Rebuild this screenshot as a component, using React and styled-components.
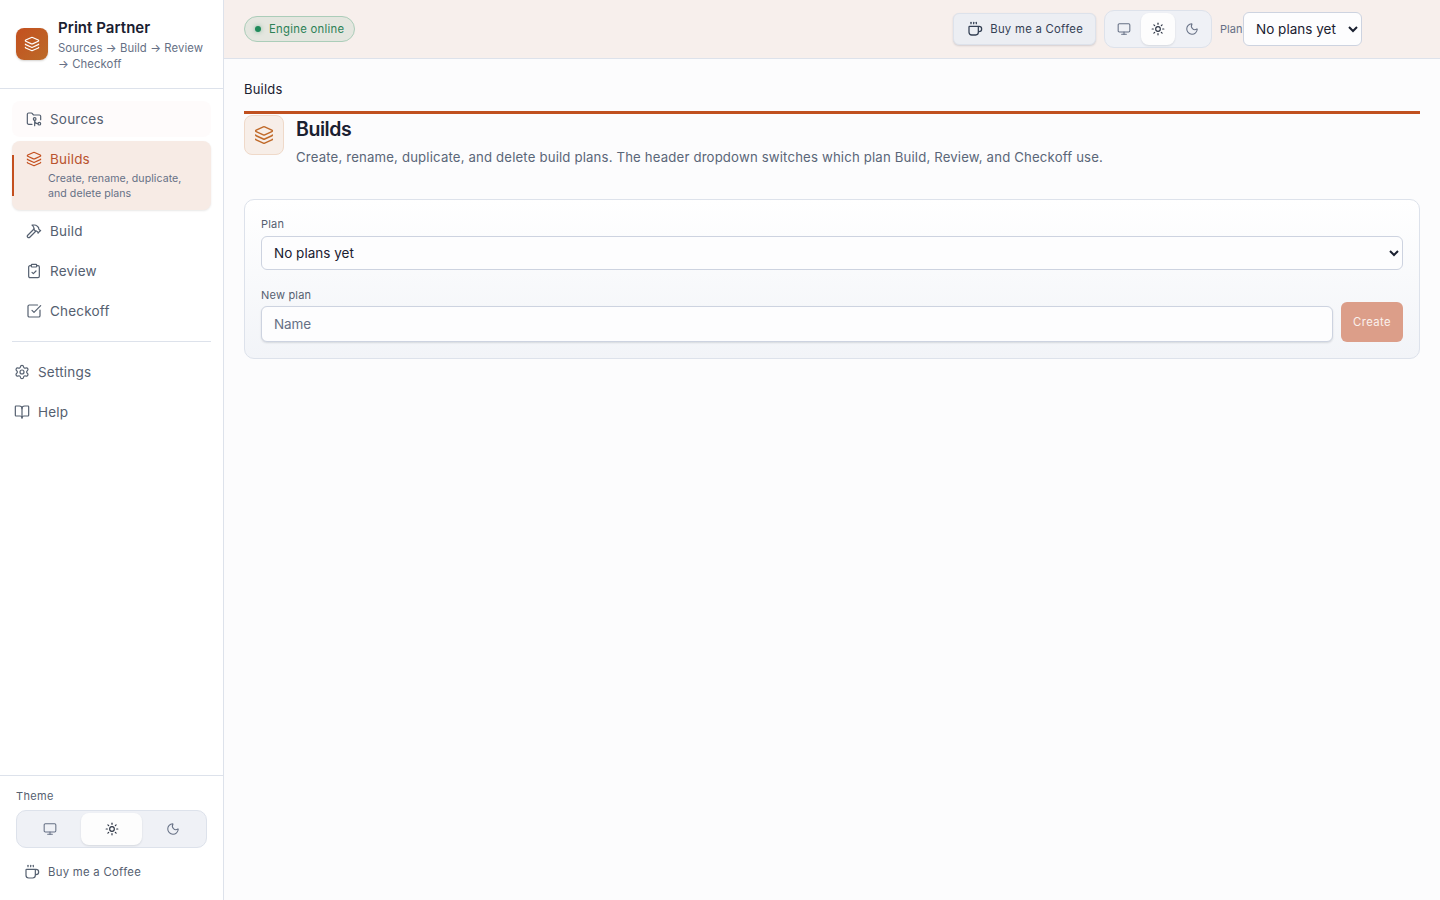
import React from "react";
import styled, { createGlobalStyle } from "styled-components";
import { FolderGit2, Layers, Hammer, ClipboardCheck, SquareCheckBig, Settings, BookOpen, Coffee, Monitor, Sun, Moon } from "lucide-react";

const Global = createGlobalStyle`
  html, body { margin: 0; height: 100%; }
  body { font-family: "Inter", "Liberation Sans", sans-serif; background: #fcfcfd; color: #1a2030; }
  * { box-sizing: border-box; }
`;

const Shell = styled.div`display: flex; height: 900px; overflow: hidden;`;
const Sidebar = styled.aside`
  width: 224px; flex: none; display: flex; flex-direction: column;
  background: #fff; border-right: 1px solid #dde2eb;
`;
const Brand = styled.div`
  height: 89px; flex: none; display: flex; align-items: flex-start; gap: 10px;
  padding: 18px 16px 0; border-bottom: 1px solid #dde2eb;
`;
const BrandMark = styled.div`
  width: 32px; height: 32px; margin-top: 10px; flex: none; border-radius: 8px; color: #fff;
  display: flex; align-items: center; justify-content: center;
  background: linear-gradient(135deg, #c4501f, #bb6a28);
  box-shadow: 0 1px 2px rgba(40,30,20,.2);
`;
const BrandText = styled.div`min-width: 0; flex: 1;`;
const BrandName = styled.div`font-size: 15px; line-height: 20px; font-weight: 600; color: #1a2030; letter-spacing: 0.05px;`;
const BrandSub = styled.div`font-size: 11.3px; line-height: 16px; color: #667085; margin-top: 2px; letter-spacing: 0.1px;`;
const Nav = styled.nav`padding: 12px 12px 0; display: flex; flex-direction: column; flex: 1;`;
const NavItem = styled.div`
  position: relative; display: flex; justify-content: center; flex-direction: column;
  min-height: 38px; border-radius: 8px; padding: 0 12px 0 14px; margin-bottom: 2px; color: #556070;
`;
const SoftNavItem = styled(NavItem)`
  min-height: 36px; margin-bottom: 4px; background: #fefbfb;
`;
const ActiveNavItem = styled(NavItem)`
  display: block; padding: 8px 12px 8px 14px; min-height: 69px; background: #f7ebe5;
  box-shadow: 0 1px 2px rgba(40,30,20,.1);
  &::before {
    content: ""; position: absolute; left: 0; top: 14px; bottom: 14px; width: 2px; background: #c4501f;
  }
`;
const NavHead = styled.div`display: flex; align-items: center; gap: 8px;`;
const NavLabel = styled.span`
  font-size: 13.5px; line-height: 20px; letter-spacing: 0.2px;
  color: ${p => p.$active ? "#b9532f" : "#556070"};
`;
const NavDesc = styled.div`
  font-size: 10.6px; line-height: 15px; color: #667085; margin: 2px 0 0 22px; letter-spacing: 0.05px; max-width: 140px;
`;
const Divider = styled.div`height: 1px; background: #dde2eb; margin: 9px 0 11px;`;
const PlainItem = styled.div`
  height: 38px; display: flex; align-items: center; gap: 8px; padding-left: 2px; color: #556070; margin-bottom: 2px;
`;
const Foot = styled.div`flex: none; height: 125px; border-top: 1px solid #dde2eb; padding: 13px 16px 0;`;
const FootLabel = styled.div`font-size: 11px; line-height: 14px; color: #556070; margin-bottom: 7px; letter-spacing: 0.35px;`;
const Segment = styled.div`
  display: flex; padding: 2px; border-radius: 10px; height: 38px;
  background: #eff1f6; border: 1px solid #dde2eb; color: #667085;
  ${p => !p.$wide && "width: 108px;"}
`;
const SegBtn = styled.div`
  flex: 1; display: flex; align-items: center; justify-content: center; border-radius: 8px;
  ${p => !p.$wide && "flex: none; width: 34px;"}
  background: ${p => p.$on ? "#fdfdfd" : "transparent"};
  box-shadow: ${p => p.$on ? "0 1px 2px rgba(30,40,60,.12)" : "none"};
  color: ${p => p.$on ? "#2c3444" : "#667085"};
`;
const FootCoffee = styled.div`
  display: flex; align-items: center; gap: 8px; padding: 0 8px; margin-top: 15px; color: #556070;
  font-size: 11.3px; line-height: 18px; letter-spacing: 0.3px;
`;
const Main = styled.main`flex: 1; min-width: 0; display: flex; flex-direction: column;`;
const Header = styled.header`
  height: 59px; flex: none; display: flex; align-items: center; padding: 0 78px 0 20px;
  background: #f7efec; border-bottom: 1px solid #dde2eb;
`;
const Status = styled.div`
  height: 26px; display: flex; align-items: center; gap: 8px; padding: 0 10px; border-radius: 13px;
  background: #e4e6df; border: 1px solid #abcdb9; color: #2c8156; font-size: 11.3px; letter-spacing: 0.27px;
`;
const Dot = styled.span`width: 6px; height: 6px; border-radius: 50%; background: #1f8a5a; box-shadow: 0 0 4px rgba(31,138,90,.5);`;
const Spacer = styled.div`flex: 1;`;
const CoffeeBtn = styled.div`
  height: 32px; display: flex; align-items: center; gap: 7px; padding: 0 12px 0 13px; border-radius: 6px;
  background: #eceef3; border: 1px solid #dde2eb; box-shadow: 0 1px 2px rgba(30,40,60,.16);
  color: #344054; font-size: 11.3px; letter-spacing: 0.28px; margin-right: 8px;
`;
const PlanLabel = styled.span`font-size: 11px; color: #667085; margin-left: 8px; width: 23px; white-space: nowrap; letter-spacing: 0.05px;`;
const Select = styled.select`
  height: 34px; border-radius: 6px; border: 1px solid #cdd3e0; background: #fdfdfe;
  font: inherit; font-size: 13.5px; color: #1a2030; padding: 0 8px;
  width: ${p => p.$w || "100%"}; letter-spacing: 0.02px;
`;
const Content = styled.div`flex: 1; padding: 20px 20px 0;`;
const Crumb = styled.div`font-size: 13px; line-height: 20px; color: #1a2030; letter-spacing: 0.2px;`;
const Hero = styled.section`
  margin-top: 12px; border-top: 3px solid #c0501f; display: flex; gap: 12px; height: 88px; padding-top: 1px;
`;
const HeroIcon = styled.div`
  width: 40px; height: 40px; border-radius: 8px; flex: none; color: #c06a2a;
  display: flex; align-items: center; justify-content: center;
  background: #f7eee8; border: 1px solid #efd9c9;
`;
const HeroTitle = styled.h1`margin: 0; font-size: 19.5px; line-height: 28px; font-weight: 600; color: #1a2030; letter-spacing: -0.45px;`;
const HeroSub = styled.p`margin: 4px 0 0; font-size: 13.2px; line-height: 20px; color: #5a6678; letter-spacing: 0.16px;`;
const Card = styled.section`
  border: 1px solid #dde2eb; border-radius: 10px; height: 160px; padding: 16px;
  background: linear-gradient(180deg, #ffffff, #f2f4f8);
  display: flex; flex-direction: column;
`;
const Label = styled.label`display: block; font-size: 11px; line-height: 16px; color: #556070; margin-bottom: 4px; letter-spacing: 0.2px;`;
const TightLabel = styled(Label)`margin-bottom: 3px;`;
const Row = styled.div`display: flex; gap: 8px; align-items: flex-end;`;
const Field = styled.div`flex: 1; min-width: 0;`;
const Input = styled.input`
  display: block; width: 100%; height: 36px; border-radius: 6px; border: 1px solid #cdd3e0; background: #fdfdfe;
  padding: 0 12px; font: inherit; font-size: 13.5px; color: #1a2030; letter-spacing: -0.1px;
  box-shadow: 0 1px 2px rgba(30,40,60,.14);
  &::placeholder { color: #667085; opacity: 1; }
`;
const Create = styled.button`
  width: 62px; height: 40px; flex: none; border: 0; border-radius: 6px; background: #dc9e89; color: #fbf1ec;
  font: inherit; font-size: 11.3px; letter-spacing: 0.4px; padding: 0;
`;
const Gap = styled.div`height: 17px; flex: none;`;

const Theme = ({ wide }) => (
  <Segment $wide={wide}>
    <SegBtn $wide={wide}><Monitor size={14} strokeWidth={1.8} /></SegBtn>
    <SegBtn $wide={wide} $on><Sun size={14} strokeWidth={2} /></SegBtn>
    <SegBtn $wide={wide}><Moon size={14} strokeWidth={1.8} /></SegBtn>
  </Segment>
);

export default function App() {
  return (
    <>
      <Global />
      <Shell>
        <Sidebar>
          <Brand>
            <BrandMark><Layers size={16} strokeWidth={1.8} /></BrandMark>
            <BrandText>
              <BrandName>Print Partner</BrandName>
              <BrandSub>Sources → Build → Review → Checkoff</BrandSub>
            </BrandText>
          </Brand>
          <Nav>
            <SoftNavItem><NavHead><FolderGit2 size={16} strokeWidth={1.8} /><NavLabel>Sources</NavLabel></NavHead></SoftNavItem>
            <ActiveNavItem>
              <NavHead><Layers size={16} strokeWidth={1.8} color="#c4501f" /><NavLabel $active>Builds</NavLabel></NavHead>
              <NavDesc>Create, rename, duplicate, and delete plans</NavDesc>
            </ActiveNavItem>
            <NavItem><NavHead><Hammer size={16} strokeWidth={1.8} /><NavLabel>Build</NavLabel></NavHead></NavItem>
            <NavItem><NavHead><ClipboardCheck size={16} strokeWidth={1.8} /><NavLabel>Review</NavLabel></NavHead></NavItem>
            <NavItem><NavHead><SquareCheckBig size={16} strokeWidth={1.8} /><NavLabel>Checkoff</NavLabel></NavHead></NavItem>
            <Divider />
            <PlainItem><Settings size={16} strokeWidth={1.8} /><NavLabel>Settings</NavLabel></PlainItem>
            <PlainItem><BookOpen size={16} strokeWidth={1.8} /><NavLabel>Help</NavLabel></PlainItem>
          </Nav>
          <Foot>
            <FootLabel>Theme</FootLabel>
            <Theme wide />
            <FootCoffee><Coffee size={16} strokeWidth={1.8} />Buy me a Coffee</FootCoffee>
          </Foot>
        </Sidebar>
        <Main>
          <Header>
            <Status><Dot />Engine online</Status>
            <Spacer />
            <CoffeeBtn><Coffee size={16} strokeWidth={1.9} />Buy me a Coffee</CoffeeBtn>
            <Theme />
            <PlanLabel>Plan</PlanLabel>
            <Select $w="119px"><option>No plans yet</option></Select>
          </Header>
          <Content>
            <Crumb>Builds</Crumb>
            <Hero>
              <HeroIcon><Layers size={20} strokeWidth={1.8} /></HeroIcon>
              <div>
                <HeroTitle>Builds</HeroTitle>
                <HeroSub>Create, rename, duplicate, and delete build plans. The header dropdown switches which plan Build, Review, and Checkoff use.</HeroSub>
              </div>
            </Hero>
            <Card>
              <Label>Plan</Label>
              <Select><option>No plans yet</option></Select>
              <Gap />
              <Row>
                <Field>
                  <TightLabel>New plan</TightLabel>
                  <Input placeholder="Name" />
                </Field>
                <Create>Create</Create>
              </Row>
            </Card>
          </Content>
        </Main>
      </Shell>
    </>
  );
}
